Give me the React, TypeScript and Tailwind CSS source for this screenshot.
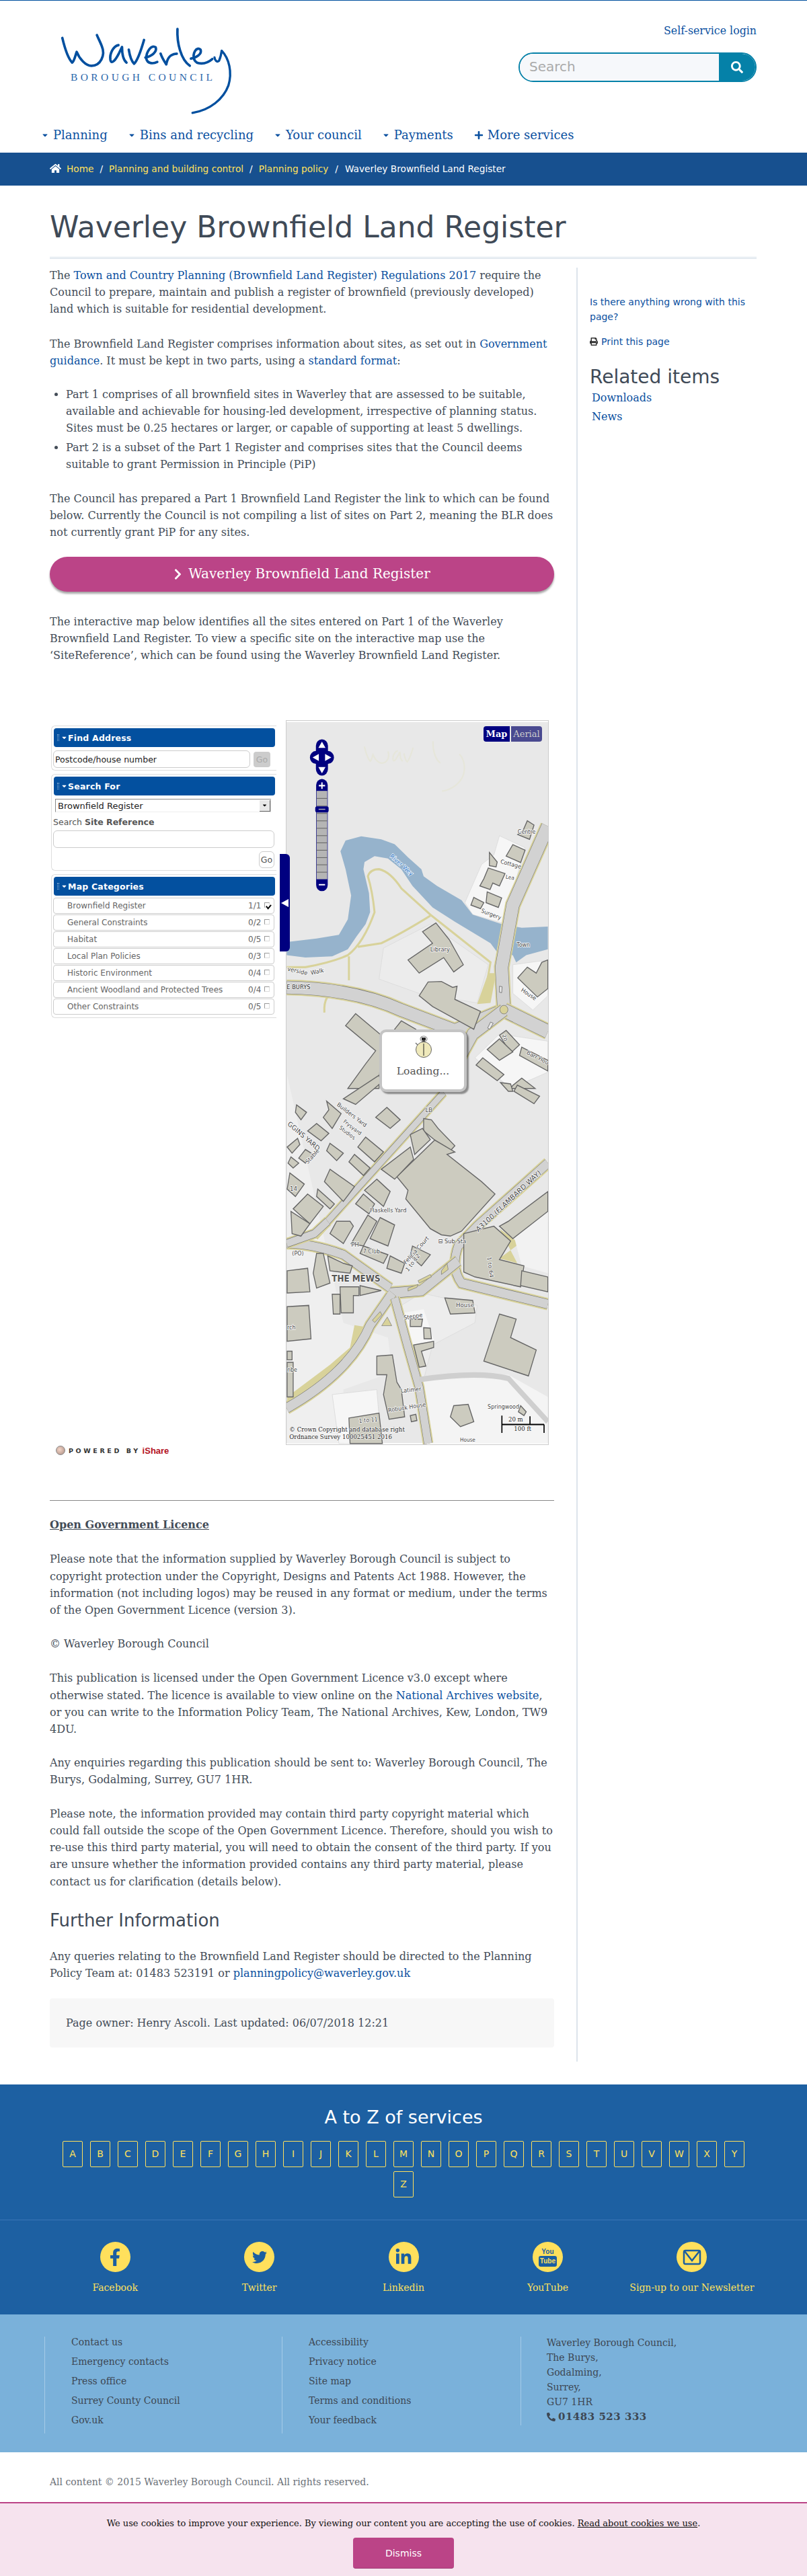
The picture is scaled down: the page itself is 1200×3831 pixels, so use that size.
import React from "react";
import { FaHome, FaCaretDown, FaPlus, FaChevronRight, FaPrint, FaSearch, FaFacebookF, FaTwitter, FaLinkedinIn, FaPhone } from "react-icons/fa";

const serif = "[font-family:'DejaVu_Serif',serif]";
const A = ({ children }: { children: React.ReactNode }) => <a className="text-[#0a50a0]">{children}</a>;

function Logo({ color = "#004f9f", className = "" }: { color?: string; className?: string }) {
  return (
    <svg viewBox="60 40 800 410" className={className} fill="none" stroke={color} strokeWidth="11" strokeLinecap="round" strokeLinejoin="round">
      <path d="M92,98 C102,140 118,190 136,208 C146,200 150,175 156,160 C168,190 195,222 222,222 C262,222 285,175 268,135 C262,118 252,100 246,85" />
      <path d="M342,130 C318,135 302,170 306,195 C312,222 332,190 345,165 L358,138 C358,165 362,195 378,208" />
      <path d="M388,150 C392,175 398,200 412,213 C430,195 445,145 456,107" />
      <path d="M462,185 C490,180 515,160 508,140 C490,125 465,160 466,190 C470,212 495,215 515,205" />
      <path d="M530,168 C535,185 548,205 555,216 C560,190 570,170 602,168" />
      <path d="M605,58 C602,120 620,195 660,222" />
      <path d="M665,190 C690,185 715,170 708,150 C690,135 670,165 680,195 C690,218 730,218 760,192" />
      <path d="M770,185 C772,198 780,208 790,200 C797,185 800,170 802,155 C835,190 850,250 832,310 C810,370 750,420 672,432" strokeWidth="10" />
    </svg>
  );
}

const lots = [
  "1000,510 1115,560 1060,740 1030,880 880,840 845,790 920,630 975,590",
  "1060,1050 1217,1030 1217,1180 1150,1240 1060,1170",
  "1000,1340 1217,1370 1217,1500 1050,1568 890,1440 ",
];
const bldA = [
  "715,875 655,912 700,960 590,1030 640,1085 750,1020 795,1080 838,1050 775,945",
  "640,1180 680,1122 740,1120 790,1145 810,1140 800,1195 915,1245 885,1320 700,1225",
  "355,1255 310,1305 445,1410 400,1465 320,1568 460,1568 470,1345",
  "530,1320 560,1285 625,1320 590,1370",
  "1125,447 1155,465 1135,525 1082,505 1105,490",
  "1060,547 1115,570 1095,622 1030,595",
  "955,580 990,620 985,640 955,635",
  "950,645 1025,668 1000,720 970,708 958,735 912,720 930,690",
  "945,745 1010,770 995,810 940,790",
  "885,768 930,790 915,815 872,800",
  "1125,1060 1165,1085 1190,1040 1217,1030 1217,1150 1170,1185 1082,1105",
  "1100,1395 1217,1450 1217,1495 1090,1430",
  "1000,1345 1030,1325 1090,1385 1050,1420",
  "945,1405 1000,1360 1060,1415 1000,1450",
  "895,1470 925,1440 1020,1510 990,1535",
  "1060,1555 1100,1525 1160,1568 1050,1568",
];
const bldB = [
  "460,0 300,95 355,118 470,30",
  "495,130 555,180 510,215 445,170",
  "660,175 695,180 725,215 800,285 765,320 710,262 660,225",
  "400,250 480,310 440,350 365,290",
  "225,105 290,155 250,215 210,170 235,140",
  "90,120 135,150 110,180 85,150",
  "180,195 235,235 200,265 140,225",
  "95,255 105,280 70,315 48,290",
  "130,300 165,320 130,355 100,335",
  "65,330 100,355 75,375 52,355",
  "240,275 300,315 270,345 225,305",
  "350,320 420,375 390,405 325,350",
  "240,380 350,450 300,510 215,430",
  "60,395 125,440 85,490 48,460",
  "140,480 210,530 150,600 75,540",
  "65,550 150,600 110,650 70,640",
  "185,460 260,520 240,540 180,490",
  "450,420 510,470 480,530 395,465",
  "390,480 440,520 415,560 355,520",
  "270,590 330,590 345,610 300,680 240,640",
  "410,565 450,590 390,690 335,680",
  "465,575 530,605 500,690 420,660",
  "510,730 575,760 560,800 495,780",
  "610,690 690,725 650,770 600,730",
  "390,690 500,725 480,760 375,720",
  "180,720 210,720 240,840 180,860 165,800",
  "230,730 300,760 340,770 330,800 240,790",
  "48,790 140,780 150,875 48,880",
  "285,855 370,855 370,890 345,890 345,960 290,960",
  "250,885 285,885 285,965 255,965",
  "375,850 470,870 375,890",
  "48,935 145,930 155,1065 48,1075",
  "710,262 800,310 765,320 920,430 980,480 830,630 780,650 740,645 690,620 580,500 590,465 540,410",
  "600,240 655,215 690,260 620,320",
  "470,380 600,290 615,340 530,420",
  "1005,30 1050,35 1060,65 1040,65",
  "1080,40 1180,85 1155,115 1065,65",
  "840,640 975,610 1050,670 1000,745 1110,770 1095,855 890,815 840,795",
  "1000,610 1040,590 1217,470 1217,550 1060,660",
  "1100,790 1217,815 1217,875 1095,850",
  "755,900 880,910 890,960 780,965",
  "1000,965 1075,985 1050,1060 1165,1110 1130,1215 930,1155",
  "600,985 655,985 650,1015 600,1015",
  "660,1020 690,1022 695,1065 662,1065",
  "615,1090 705,1075 705,1100 650,1115 670,1175 640,1180",
  "450,1135 520,1130 540,1240 560,1270 575,1380 505,1390 480,1290 495,1210 450,1210",
  "325,1385 460,1365 475,1488 330,1488",
  "795,1335 860,1330 885,1400 825,1420 780,1380",
  "600,1375 625,1370 630,1395 605,1400",
  "1095,1335 1120,1360 1110,1375 1085,1360",
  "48,1115 70,1115 70,1150 48,1150",
  "48,1160 75,1160 75,1300 48,1300",
];

function Road({ d, w }: { d: string; w: number }) {
  return (
    <>
      <path d={d} fill="none" stroke="#d8d29a" strokeWidth={w + 14} />
      <path d={d} fill="none" stroke="#707070" strokeWidth={w + 3} />
      <path d={d} fill="none" stroke="#d2d2d2" strokeWidth={w} />
    </>
  );
}

function L({ x, y, r = 0, s = 25, b, t, c = "#444" }: { x: number; y: number; r?: number; s?: number; b?: boolean; t: string; c?: string }) {
  return (
    <text x={x} y={y} fontSize={s} fontFamily="'DejaVu Sans',sans-serif" fontWeight={b ? 700 : 400} fill={c} stroke="#fff" strokeWidth="4" paintOrder="stroke" transform={r ? `rotate(${r} ${x} ${y})` : undefined}>
      {t}
    </text>
  );
}

function MapDrawing() {
  return (
    <svg viewBox="0 0 391 1078" className="block w-full h-full">
      <rect width="391" height="1078" fill="#e8e8e8" />
      <g opacity="0.55">
        <svg x="110" y="25" width="160" height="82" viewBox="60 40 800 410"><g fill="none" stroke="#e6e6d0" strokeWidth="11"><path d="M92,98 C102,140 118,190 136,208 C146,200 150,175 156,160 C168,190 195,222 222,222 C262,222 285,175 268,135 M342,130 C318,135 302,170 306,195 C312,222 332,190 358,138 C358,165 362,195 378,208 M388,150 C392,175 398,200 412,213 C430,195 445,145 456,107 M605,58 C602,120 620,195 660,222 M802,155 C835,190 850,250 832,310 C810,370 750,420 672,432" /></g></svg>
      </g>
      <g transform="translate(-15,-12) scale(0.3333,0.357)">
        {lots.map((p) => <polygon key={p} points={p} fill="#f6f6f6" stroke="#d6d6d6" strokeWidth="2" />)}
        <path d="M480,980 L690,880 L950,1050 L900,1210 L640,1170 L460,1110Z" fill="#ececec" stroke="#d8d8d8" strokeWidth="2" />
        <path d="M46,955 L180,940 L280,925 L320,860 L335,760 L310,650 L287,575 L310,530 L380,512 L470,525 L530,545 L590,600 L650,650 L660,680 L720,720 L830,780 L880,840 L1010,880 L1100,895 L1217,890 L1217,985 L1120,1010 L1075,1040 L1060,1010 L1000,1010 L960,960 L800,870 L700,810 L610,720 L560,650 L500,605 L440,595 L395,620 L390,650 L415,750 L420,830 L400,880 L360,930 L320,985 L250,1015 L130,1020 L46,1010Z" fill="#96b3cc" />
        <g fill="none" stroke="#d8d29a" strokeWidth="9">
          <path d="M46,1060 L130,1060 Q250,1040 320,1010 Q390,960 440,830 Q430,740 410,680 Q420,650 460,650 Q510,660 560,730 L690,840 L960,1040 L930,1200" />
          <path d="M690,845 Q560,920 470,960 L365,975" />
          <path d="M325,1015 L325,1115" />
          <path d="M215,1250 Q210,1170 270,1165" />
        </g>
        <path d="M950,1085 L985,1085 L960,1210 L900,1215Z" fill="#d8d29a" />
        <Road d="M46,1145 Q350,1150 560,1240 L800,1325 L1020,1240" w={52} />
        <Road d="M1217,470 L1060,800 L1010,1060 L1020,1240" w={56} />
        <Road d="M1020,1240 L1217,1330" w={56} />
        <Road d="M1020,1240 L880,1340 L745,1568" w={50} />
        <circle cx="1020" cy="1238" r="18" fill="#d8d29a" stroke="#666" strokeWidth="2" />
        <path d="M1000,1140 l12,2 l-2,25 l-10,-2Z M960,1290 l12,5 l-15,25 l-10,-5Z" fill="#e8e8e8" stroke="#555" strokeWidth="2" />
        {bldA.map((p) => <polygon key={p} points={p} fill="#cccbbf" stroke="#666" strokeWidth="4" />)}
        <L x={1082} y={503} s={24} t="Centre" />
        <L x={1003} y={625} r={14} s={24} t="Cottage" />
        <L x={1027} y={688} r={10} s={22} t="Lea" />
        <L x={916} y={830} r={20} s={24} t="Surgery" />
        <L x={1077} y={976} s={24} t="Town" />
        <L x={690} y={994} s={25} t="Library" />
        <L x={508} y={598} r={40} s={25} c="#1a6fc4" t="River Wey" />
        <L x={48} y={1075} r={12} s={25} t="verside" />
        <L x={155} y={1092} r={-10} s={25} t="Walk" />
        <L x={46} y={1151} s={25} t="E  BURYS" c="#222" />
        <L x={1095} y={1160} r={32} s={24} t="House" />
        <L x={1120} y={1424} r={25} s={24} t="Barr Hou" />
        <L x={1012} y={1345} r={70} s={22} t="20" />
      </g>
      <g transform="translate(-15,528) scale(0.3333,0.37)">
        <path d="M640,1230 L1040,1210 L1217,1300 L1217,1488 L680,1488Z" fill="#f4f4f4" />
        <path d="M48,0 L48,1488 L300,1488 L300,1270 L520,1200 L500,1060 L300,1000Z" fill="#efefef" />
        <path d="M250,1290 L450,1270 L470,1488 L280,1488Z" fill="#f6f6f6" stroke="#d4d4d4" strokeWidth="2" />
        <path d="M560,930 L650,880 L900,930 L890,1000 L700,1090 L660,1230 L620,1230Z" fill="#ededed" stroke="#d8d8d8" strokeWidth="2" />
        <path d="M570,960 L660,945 L710,1080 L610,1100Z" fill="#f6f6f6" />
        <path d="M1000,620 L1090,680 L1000,740 L1080,760Z" fill="#d8d29a" />
        <path d="M1050,600 L1217,480 L1217,800 L1100,770Z" fill="#f2f2f2" />
        <path d="M350,1010 L330,1100 L240,1170 L48,1300 L48,1330 L300,1200 L420,1020Z" fill="#d8d29a" />
        <Road d="M750,70 L560,260 L360,460 L230,590 L170,650" w={26} />
        <Road d="M1217,355 L900,610 L815,690 Q780,780 830,840 L1217,925" w={36} />
        <Road d="M510,880 L650,870 L815,750" w={40} />
        <Road d="M520,880 L420,1010 Q330,1200 46,1345" w={38} />
        <Road d="M530,900 L590,1100 L640,1260 L680,1488" w={34} />
        <Road d="M46,680 Q160,680 300,725 L510,860" w={34} />
        <Road d="M230,590 L170,640 L46,680" w={30} />
        <path d="M590,860 l45,-15 l-5,12 l-40,15Z M635,830 l55,-25 l5,10 l-55,25Z M430,990 l35,-35 l8,12 l-32,32Z M472,1012 l25,-35 l20,35Z M740,790 l25,-30 l5,25 l-30,20Z" fill="#d8d29a" stroke="#777" strokeWidth="2" />
        <path d="M640,1230 Q900,1195 1040,1225 L1217,1400" fill="none" stroke="#cfcfcf" strokeWidth="22" />
        {bldB.map((p) => <polygon key={p} points={p} fill="#cccbbf" stroke="#666" strokeWidth="4" />)}
        <L x={270} y={122} r={35} s={24} t="Builders  Yard" />
        <L x={280} y={215} r={35} s={22} t="Studios" />
        <L x={298} y={190} r={35} s={22} t="Frysyard" />
        <L x={48} y={200} r={38} s={28} t="GGINS YARD" />
        <L x={140} y={360} r={-45} s={24} t="Stable" />
        <L x={60} y={468} s={26} t="14" />
        <L x={668} y={150} s={26} t="LB" />
        <L x={420} y={553} s={25} t="Haskells  Yard" />
        <L x={335} y={692} s={26} t="PH" />
        <L x={388} y={720} s={24} t="7 Club" />
        <L x={70} y={728} s={24} t="(PO)" />
        <L x={725} y={680} s={25} t="⊟ Sub  Sta" />
        <L x={580} y={765} r={-45} s={24} t="Felicia Court" />
        <L x={590} y={795} r={-50} s={24} t="1 to 12" />
        <L x={905} y={635} r={-40} s={30} t="A3100 (FLAMBARD WAY)" />
        <L x={945} y={735} r={82} s={24} t="1 to 64" />
        <L x={248} y={835} s={36} b c="#555" t="THE MEWS" />
        <L x={805} y={938} s={26} t="House" />
        <L x={572} y={988} r={-8} s={24} t="Steppe" />
        <L x={48} y={1028} s={24} t="rch" />
        <L x={48} y={1198} s={24} t="nbe" />
        <L x={558} y={1283} r={-5} s={24} t="Latimer" />
        <L x={502} y={1362} r={-8} s={24} t="Robuck House" />
        <L x={370} y={1405} r={-5} s={24} t="1 to 11" />
        <L x={947} y={1348} s={24} t="Springwood" />
        <L x={823} y={1480} s={22} t="House" />
        <path d="M1011,1375 V1445 M1011,1411 H1200 M1200,1411 V1445 M1137,1378 V1411" stroke="#000" strokeWidth="5" fill="none" />
        <text x="1040" y="1398" fontSize="26" fontFamily="'DejaVu Serif',serif" fill="#222" stroke="#fff" strokeWidth="3" paintOrder="stroke">20 m</text>
        <text x="1065" y="1437" fontSize="26" fontFamily="'DejaVu Serif',serif" fill="#222" stroke="#fff" strokeWidth="3" paintOrder="stroke">100 ft</text>
        <g fontSize="26" fontFamily="'DejaVu Serif',serif" fill="#222" stroke="#fff" strokeWidth="3" paintOrder="stroke">
          <text x="58" y="1440">© Crown Copyright and database right</text>
          <text x="58" y="1470">Ordnance Survey 100025451 2016</text>
        </g>
      </g>
      <g transform="translate(-15,-12) scale(0.3333,0.357)">
        <path d="M204,106 a27,27 0 0 1 27,27 v22 h0 a27,27 0 0 1 27,27 a27,27 0 0 1 -27,27 v22 a27,27 0 0 1 -54,0 v-22 a27,27 0 0 1 -27,-27 a27,27 0 0 1 27,-27 v-22 a27,27 0 0 1 27,-27Z" fill="#000080" />
        <path d="M204,116 l16,26 h-32Z M204,248 l16,-26 h-32Z M162,182 l28,-15 v30Z M246,182 l-28,-15 v30Z" fill="#fff" />
        <path d="M178,298 a26,26 0 0 1 52,0 V716 a26,26 0 0 1 -52,0Z" fill="#000080" />
        <rect x="180" y="322" width="48" height="370" fill="#b5b5b5" />
        {[352, 384, 415, 446, 477, 508, 538, 569, 600, 630, 661].map((y) => <rect key={y} x="180" y={y} width="48" height="3" fill="#666" />)}
        <rect x="174" y="387" width="60" height="25" rx="8" fill="#000080" />
        <path d="M189,399 h30" stroke="#b5b5b5" strokeWidth="4" />
        <path d="M190,300 h28 M204,286 v28 M190,715 h28" stroke="#fff" strokeWidth="6" />
      </g>
    </svg>
  );
}

function Stopwatch() {
  return (
    <svg width="28" height="34" viewBox="0 0 28 34">
      <ellipse cx="15" cy="5" rx="5" ry="4" fill="none" stroke="#888" strokeWidth="1.2" />
      <rect x="12" y="3" width="6" height="4" fill="#222" />
      <rect x="13" y="7" width="4" height="3" fill="#555" />
      <path d="M3,11 l3,3" stroke="#777" strokeWidth="1.5" />
      <circle cx="15" cy="21" r="11.5" fill="#efe9bb" stroke="#666" strokeWidth="1" />
      <path d="M15,12 V30" stroke="#222" strokeWidth="1" />
    </svg>
  );
}

function Panel({ title, children, className = "" }: { title: string; children: React.ReactNode; className?: string }) {
  return (
    <div className={`border border-r-0 border-[#ddd] rounded-l-md pl-[2px] pt-[3px] pb-[3px] ${className}`}>
      <div className="h-[28px] w-[329px] ml-[1px] bg-[#03509f] rounded flex items-center pl-[5px] text-white text-[12.5px] font-bold tracking-[0.2px]">
        <span className="w-[3px] h-[10px] border-x border-dotted border-[#8fb2d8] mr-[3px]" />
        <FaCaretDown className="w-[9px] h-[10px] mr-[1px]" />
        {title}
      </div>
      {children}
    </div>
  );
}

function Cat({ t, n, on }: { t: string; n: string; on?: boolean }) {
  return (
    <div className="h-[24px] w-[329px] mb-[1px] border border-[#ccc] rounded flex items-center text-[12px] text-[#666]">
      <span className="ml-[20px] flex-1 whitespace-nowrap">{t}</span>
      <span className="w-[24px] whitespace-nowrap">{n}</span>
      <span className="relative w-[8px] h-[8px] mr-[6px] mb-[2px] border border-[#999] border-r-[#ddd] border-b-[#ddd] bg-white">
        {on && <svg viewBox="0 0 10 10" className="absolute left-[1px] top-[1px] w-[9px] h-[9px]"><path d="M1,4 L4,8 L9,2" fill="none" stroke="#000" strokeWidth="2" /></svg>}
      </span>
    </div>
  );
}

function Social({ label, children }: { label: string; children: React.ReactNode }) {
  return (
    <div className="flex-1 flex flex-col items-center">
      <div className="w-[45px] h-[45px] rounded-full bg-[#ffe05c] flex items-center justify-center text-[#1b5ea0]">{children}</div>
      <div className={`mt-[12px] text-[14px] leading-[22px] text-[#ffe05c] ${serif}`}>{label}</div>
    </div>
  );
}

const nav = ["Planning", "Bins and recycling", "Your council", "Payments"];
const letters = "ABCDEFGHIJKLMNOPQRSTUVWXYZ".split("");
const cats: [string, string, boolean?][] = [
  ["Brownfield Register", "1/1", true],
  ["General Constraints", "0/2"],
  ["Habitat", "0/5"],
  ["Local Plan Policies", "0/3"],
  ["Historic Environment", "0/4"],
  ["Ancient Woodland and Protected Trees", "0/4"],
  ["Other Constraints", "0/5"],
];

export default function App() {
  return (
    <div className={`w-[1200px] bg-white text-[#434c57] text-[16px] leading-[25.2px] ${serif}`}>
      {/* header */}
      <header className="border-t border-[#004f9f] h-[227px] relative">
        <div className="flex justify-between pl-[74px] pr-[75px]">
          <div className="relative w-[280px] h-[170px] pt-[36px]">
            <Logo className="ml-[8px] w-[267px] h-[137px]" />
            <span className="absolute left-[31px] top-[104px] whitespace-nowrap text-[15.5px] leading-[20px] tracking-[4.4px] text-[#2a66ab] [font-family:'Liberation_Serif',serif]">BOROUGH COUNCIL</span>
          </div>
          <div className="flex flex-col items-end pt-[34px]">
            <a className="text-[15.8px] leading-[22px] text-[#0a50a0]">Self-service login</a>
            <div className="mt-[21px] flex w-[354px] h-[44px] rounded-full border-[2px] border-[#0581a8] overflow-hidden">
              <div className="flex-1 bg-[#f6f8fb] pl-[14px] flex items-center text-[20px] text-[#aaa] [font-family:'DejaVu_Sans',sans-serif]">Search</div>
              <div className="w-[54px] bg-[#0581a8] flex items-center justify-center text-white"><FaSearch className="w-[18px] h-[18px]" /></div>
            </div>
          </div>
        </div>
        <nav className="absolute left-[62px] top-[188px] flex items-center text-[18px] leading-[24px] text-[#0a50a0]">
          {nav.map((n) => (
            <span key={n} className="flex items-center mr-[31px]"><FaCaretDown className="w-[10px] h-[12px] mr-[7px]" />{n}</span>
          ))}
          <span className="flex items-center"><FaPlus className="w-[14px] h-[14px] mr-[6px]" />More services</span>
        </nav>
      </header>
      {/* breadcrumb */}
      <div className="h-[49px] bg-[#17508f] pl-[74px] flex items-center text-[13.7px] [font-family:'DejaVu_Sans',sans-serif] text-[#ffe05c]">
        <FaHome className="w-[17px] h-[17px] text-white mr-[8px] -mt-[3px]" />
        <a>Home</a><span className="text-white mx-[9px]">/</span>
        <a>Planning and building control</a><span className="text-white mx-[9px]">/</span>
        <a>Planning policy</a><span className="text-white mx-[10px]">/</span>
        <span className="text-white">Waverley Brownfield Land Register</span>
      </div>
      {/* title */}
      <div className="mx-[74px] w-[1051px] pt-[37px] border-b-[3px] border-double border-[#d5dfe9] h-[109px]">
        <h1 className="text-[44px] leading-[50px] text-[#3f4a57] [font-family:'DejaVu_Sans',sans-serif]">Waverley Brownfield Land Register</h1>
      </div>
      {/* body */}
      <div className="flex pl-[74px] pt-[12px] h-[2681px]">
        <main className="w-[750px]">
          <p>The <A>Town and Country Planning (Brownfield Land Register) Regulations 2017</A> require the Council to prepare, maintain and publish a register of brownfield (previously developed) land which is suitable for residential development.</p>
          <p className="mt-[26px]">The Brownfield Land Register comprises information about sites, as set out in <A>Government guidance</A>. It must be kept in two parts, using a <A>standard format</A>:</p>
          <ul className="mt-[25px] list-disc pl-[24px]">
            <li>Part 1 comprises of all brownfield sites in Waverley that are assessed to be suitable, available and achievable for housing-led development, irrespective of planning status. Sites must be 0.25 hectares or larger, or capable of supporting at least 5 dwellings.</li>
            <li className="mt-[3px]">Part 2 is a subset of the Part 1 Register and comprises sites that the Council deems suitable to grant Permission in Principle (PiP)</li>
          </ul>
          <p className="mt-[26px]">The Council has prepared a Part 1 Brownfield Land Register the link to which can be found below. Currently the Council is not compiling a list of sites on Part 2, meaning the BLR does not currently grant PiP for any sites.</p>
          <a className="mt-[23px] flex items-center justify-center h-[52px] rounded-full bg-[#bb4487] text-white text-[20px] shadow-[0_3px_3px_rgba(0,0,0,0.35)]">
            <FaChevronRight className="w-[13px] h-[18px] mr-[9px]" />Waverley Brownfield Land Register
          </a>
          <p className="mt-[32px]">The interactive map below identifies all the sites entered on Part 1 of the Waverley Brownfield Land Register. To view a specific site on the interactive map use the ‘SiteReference’, which can be found using the Waverley Brownfield Land Register.</p>

          <div className="relative mt-[84px] flex h-[1078px] [font-family:'DejaVu_Sans',sans-serif]">
            <div className="w-[351px] pl-[2px] pt-[8px]">
              <div className="w-[335px]">
                <Panel title="Find Address">
                  <div className="flex mt-[5px] items-center">
                    <div className="w-[293px] h-[26px] border border-[#ccc] rounded-md flex items-center pl-[2px] text-[12.5px] text-[#222]">Postcode/house number</div>
                    <div className="ml-[5px] w-[25px] h-[23px] rounded bg-[#ccc] text-[#aaa] text-[12.5px] flex items-center justify-center">Go</div>
                  </div>
                </Panel>
                <Panel title="Search For" className="mt-[5px]">
                  <div className="ml-[3px] mt-[5px] w-[321px] h-[20px] border border-[#888] border-r-[#ccc] border-b-[#eee] flex items-center justify-between pl-[3px] text-[13px] text-[#222]">
                    Brownfield Register
                    <span className="w-[16px] h-[17px] bg-[#e8e8e8] border-r border-b border-[#666] flex items-center justify-center text-black"><FaCaretDown className="w-[9px] h-[9px]" /></span>
                  </div>
                  <div className="mt-[6px] text-[12.5px] leading-[18px] text-[#555]">Search <b>Site Reference</b></div>
                  <div className="mt-[3px] w-[329px] h-[26px] border border-[#ccc] rounded-md" />
                  <div className="mt-[5px] ml-[306px] w-[23px] h-[25px] border border-[#ccc] rounded-md text-[12.5px] flex items-center justify-center text-[#555]">Go</div>
                </Panel>
                <Panel title="Map Categories" className="mt-[5px]">
                  <div className="mt-[3px]">
                    {cats.map(([t, n, on]) => <Cat key={t} t={t} n={n} on={on} />)}
                  </div>
                </Panel>
              </div>
              <div className="mt-[633px] ml-[7px] flex items-center h-[20px] text-[#333]">
                <span className="w-[14px] h-[14px] rounded-full bg-[radial-gradient(circle_at_40%_40%,#f4d6c8,#a98a80)] border border-[#888] mr-[5px]" />
                <span className="text-[9.5px] font-bold tracking-[3.6px] mr-[1px]">POWERED BY</span>
                <span className="text-[13px] text-[#b3121d] ml-[2px] [font-family:'Liberation_Sans',sans-serif] font-bold">iShare</span>
              </div>
            </div>
            <div className="relative w-[391px] h-[1078px] border border-[#ccc] overflow-hidden">
              <MapDrawing />
              <div className="absolute left-[293px] top-[8px] flex gap-[2px] text-[13px] [font-family:'DejaVu_Serif',serif]">
                <span className="w-[39px] h-[23px] rounded-l bg-[#000080] text-white font-bold flex items-center justify-center">Map</span>
                <span className="w-[46px] h-[23px] rounded-r bg-[#4a4a90] text-[#ccc] flex items-center justify-center">Aerial</span>
              </div>
              <div className="absolute left-[138px] top-[459px] w-[130px] h-[93px] bg-white border-[4px] border-[#c4c4c4] rounded-[10px] shadow-[3px_3px_2px_rgba(0,0,0,0.4)] flex flex-col items-center pt-[5px] text-[15.5px] text-[#555] [font-family:'DejaVu_Serif',serif]">
                <Stopwatch />
                <div className="mt-[9px] leading-[20px]">Loading...</div>
              </div>
            </div>
            <div className="absolute left-[342px] top-[199px] w-[15px] h-[145px] bg-[#000080] rounded-r-[6px] flex items-center justify-center">
              <svg width="11" height="12" viewBox="0 0 11 12"><path d="M0,6 L11,0 V12Z" fill="#fff" /></svg>
            </div>
          </div>

          <hr className="mt-[82px] border-t-[1px] border-[#888]" />
          <p className="mt-[23px]"><b className="underline">Open Government Licence</b></p>
          <p className="mt-[26px]">Please note that the information supplied by Waverley Borough Council is subject to copyright protection under the Copyright, Designs and Patents Act 1988. However, the information (not including logos) may be reused in any format or medium, under the terms of the Open Government Licence (version 3).</p>
          <p className="mt-[25px]">© Waverley Borough Council</p>
          <p className="mt-[26px]">This publication is licensed under the Open Government Licence v3.0 except where otherwise stated. The licence is available to view online on the <A>National Archives website</A>, or you can write to the Information Policy Team, The National Archives, Kew, London, TW9 4DU.</p>
          <p className="mt-[25px]">Any enquiries regarding this publication should be sent to: Waverley Borough Council, The Burys, Godalming, Surrey, GU7 1HR.</p>
          <p className="mt-[25px]">Please note, the information provided may contain third party copyright material which could fall outside the scope of the Open Government Licence. Therefore, should you wish to re-use this third party material, you will need to obtain the consent of the third party. If you are unsure whether the information provided contains any third party material, please contact us for clarification (details below).</p>
          <h2 className="mt-[28px] text-[26px] leading-[34px] text-[#3f4a57] [font-family:'DejaVu_Sans',sans-serif]">Further Information</h2>
          <p className="mt-[24px]">Any queries relating to the Brownfield Land Register should be directed to the Planning Policy Team at: 01483 523191 or <A>planningpolicy@waverley.gov.uk</A></p>
          <div className="mt-[25px] h-[73px] bg-[#f7f7f7] rounded-sm pl-[24px] flex items-center">Page owner: Henry Ascoli. Last updated: 06/07/2018 12:21</div>
        </main>
        <aside className="ml-[33px] mt-[1px] w-[268px] h-[2668px] border-l-[2px] border-[#dde4ec] pl-[18px] pt-[40px] [font-family:'DejaVu_Sans',sans-serif] text-[14px] leading-[22px] text-[#0a50a0]">
          <a className="block">Is there anything wrong with this page?</a>
          <a className="mt-[15px] flex items-center"><FaPrint className="w-[12px] h-[12px] mr-[5px] text-[#333]" />Print this page</a>
          <h3 className="mt-[24px] text-[28px] leading-[36px] text-[#3f4a57]">Related items</h3>
          <a className={`block -mt-[1px] ml-[3px] text-[16px] leading-[28px] ${serif}`}>Downloads</a>
          <a className={`block ml-[3px] text-[16px] leading-[28px] ${serif}`}>News</a>
        </aside>
      </div>
      <div className="h-[34px]" />
      {/* A to Z */}
      <section className="bg-[#1d60a2] h-[342px]">
        <div className="h-[202px] pt-[33px] border-b border-[#3b76b8]">
          <h2 className="text-center text-[27px] leading-[32px] text-white [font-family:'DejaVu_Sans',sans-serif]">A to Z of services</h2>
          <div className="mx-auto mt-[19px] w-[1050px] flex flex-wrap justify-center gap-x-[11px] gap-y-[6px]">
            {letters.map((l) => (
              <a key={l} className="w-[30px] h-[39px] border border-[#ffe05c] rounded-[2px] flex items-center justify-center text-[14px] text-[#ffe05c] [font-family:'DejaVu_Sans',sans-serif]">{l}</a>
            ))}
          </div>
        </div>
        <div className="mx-auto mt-[32px] w-[1072px] flex">
          <Social label="Facebook"><FaFacebookF className="w-[22px] h-[26px]" /></Social>
          <Social label="Twitter"><FaTwitter className="w-[24px] h-[22px]" /></Social>
          <Social label="Linkedin"><FaLinkedinIn className="w-[26px] h-[26px]" /></Social>
          <Social label="YouTube">
            <span className="flex flex-col items-center [font-family:'Liberation_Sans',sans-serif] font-bold leading-none">
              <span className="text-[10px] leading-[13px]">You</span>
              <span className="bg-[#1b5ea0] text-[#ffe05c] rounded-[3px] px-[2px] text-[10px] leading-[16px]">Tube</span>
            </span>
          </Social>
          <Social label="Sign-up to our Newsletter">
            <svg width="28" height="26" viewBox="0 0 28 26" fill="none" stroke="currentColor" strokeWidth="2.5"><rect x="2" y="3" width="24" height="20" rx="2" /><path d="M3,4 L14,18 L25,4" /></svg>
          </Social>
        </div>
      </section>
      {/* links */}
      <section className="bg-[#7ab1da] h-[205px] flex pt-[33px] text-[14px] text-[#3d4753]">
        <div className="ml-[66px] w-[353px] h-[144px] border-l border-[#a5cbe8] pl-[39px] leading-[29px]">
          <div className="-mt-[6px]">
            {["Contact us", "Emergency contacts", "Press office", "Surrey County Council", "Gov.uk"].map((t) => <a key={t} className="block">{t}</a>)}
          </div>
        </div>
        <div className="w-[355px] h-[144px] border-l border-[#a5cbe8] pl-[39px] leading-[29px]">
          <div className="-mt-[6px]">
            {["Accessibility", "Privacy notice", "Site map", "Terms and conditions", "Your feedback"].map((t) => <a key={t} className="block">{t}</a>)}
          </div>
        </div>
        <div className="h-[132px] border-l border-[#a5cbe8] pl-[38px] leading-[22px]">
          <div className="-mt-[2px]">
            <div>Waverley Borough Council,</div>
            <div>The Burys,</div>
            <div>Godalming,</div>
            <div>Surrey,</div>
            <div>GU7 1HR</div>
            <div className="flex items-center font-bold text-[15px] tracking-[0.5px]"><FaPhone className="w-[13px] h-[13px] mr-[4px] -scale-x-100" />01483 523 333</div>
          </div>
        </div>
      </section>
      <div className="h-[74px] pl-[74px] pt-[33px] text-[14px] leading-[22px] text-[#6b7178]">All content © 2015 Waverley Borough Council. All rights reserved.</div>
      {/* cookie */}
      <div className="h-[110px] border-t-[2px] border-[#bb4487] bg-[#f6e3ee] flex flex-col items-center pt-[19px] text-[13px] leading-[22px] text-[#111]">
        <p>We use cookies to improve your experience. By viewing our content you are accepting the use of cookies. <a className="underline">Read about cookies we use</a>.</p>
        <button className="mt-[10px] w-[150px] h-[46px] bg-[#bb4487] border-b border-[#a03a74] rounded-sm text-white text-[14px] [font-family:'DejaVu_Sans',sans-serif]">Dismiss</button>
      </div>
    </div>
  );
}
